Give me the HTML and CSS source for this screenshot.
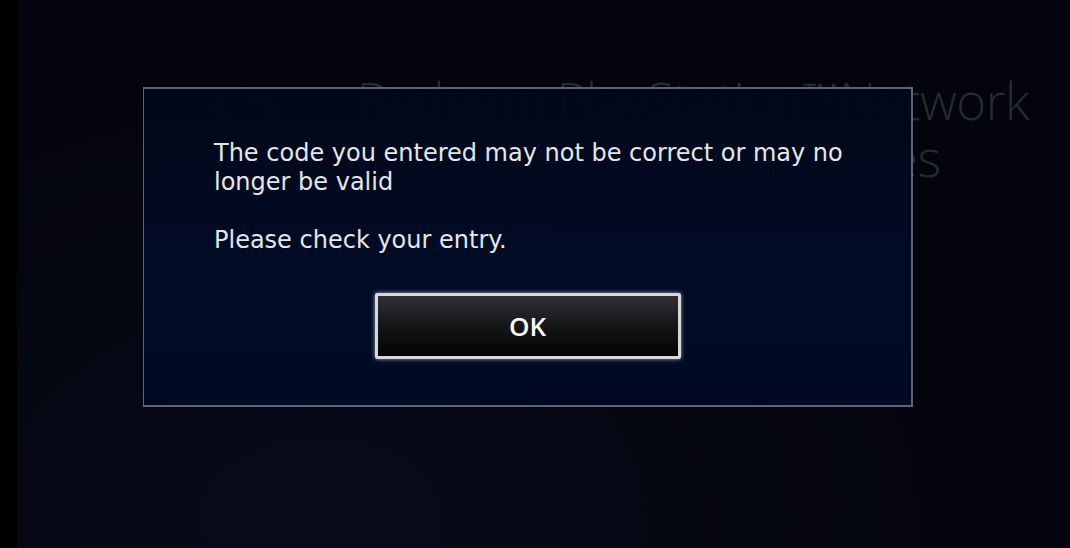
FILE: index.html
```html
<!DOCTYPE html>
<html lang="en">
<head>
    <meta charset="UTF-8">
    <meta name="viewport" content="width=device-width, initial-scale=1.0">
    <title>Redeem Codes</title>
    <link rel="stylesheet" href="styles.css">
</head>
<body>
    <div class="screen">
        <div class="edge"></div>

        <main class="backdrop">
            <div class="page-head">
                <svg class="page-icon" width="110" height="110" viewBox="0 0 110 110">
                    <text x="4" y="66" font-family="Open Sans" font-size="70" font-weight="300" fill="#1a2030">12</text>
                    <path d="M36 58 Q80 68 96 106" stroke="#141a28" stroke-width="3" fill="none"/>
                </svg>
                <h1 class="page-title">Redeem PlayStation™Network Cards and Voucher Codes</h1>
            </div>
        </main>

        <!-- error dialog -->
        <div class="dialog">
            <p class="dialog-text">The code you entered may not be correct or may no longer be valid</p>
            <p class="dialog-text">Please check your entry.</p>
            <div class="dialog-actions">
                <button class="ok-btn">OK</button>
            </div>
        </div>
    </div>
</body>
</html>
```

FILE: styles.css
```css
body {
    margin: 0;
    padding: 0;
    background-color: #03040e;
    font-family: "DejaVu Sans", "Open Sans", sans-serif;
    overflow: hidden;
}

.screen {
    position: relative;
    display: flex;
    width: 1070px;
    height: 548px;
    background: radial-gradient(ellipse at 30% 95%, #080b1a 0%, #03040e 60%);
}

.edge {
    width: 17px;
    flex-shrink: 0;
    background-color: #000;
}

.backdrop {
    flex: 1;
    padding: 72px 0 0 180px;
}

.page-head {
    display: flex;
    gap: 50px;
}

.page-icon {
    flex-shrink: 0;
    margin-top: 8px;
}

.page-title {
    margin: 0;
    width: 720px;
    font-family: "Open Sans", sans-serif;
    font-weight: 300;
    font-size: 51px;
    line-height: 57px;
    color: #262a36;
    letter-spacing: -0.5px;
}

.dialog {
    position: absolute;
    left: 143px;
    top: 87px;
    width: 770px;
    height: 320px;
    padding: 50px 0 0 70px;
    box-sizing: border-box;
    border: 2px solid #5d6476;
    border-width: 2px 2px 2px 1px;
    background: linear-gradient(180deg, rgba(2, 8, 26, 0.95) 0%, rgba(2, 12, 40, 0.95) 60%, rgba(1, 10, 35, 0.96) 100%);
}

.dialog-text {
    margin: 0 0 29px;
    width: 640px;
    font-size: 24px;
    line-height: 29px;
    color: #e4e6ea;
}

.dialog-actions {
    display: flex;
    justify-content: center;
    margin: 38px 0 0 -70px;
}

.ok-btn {
    width: 306px;
    height: 66px;
    border: 3px solid #d6d8dc;
    border-radius: 2px;
    background: linear-gradient(180deg, #2e2f33 0%, #141416 55%, #030303 100%);
    box-shadow: 0 0 4px rgba(220, 225, 235, 0.7);
    color: #fff;
    font-family: "Open Sans", sans-serif;
    font-weight: 600;
    font-size: 26px;
    padding: 0;
}
```
